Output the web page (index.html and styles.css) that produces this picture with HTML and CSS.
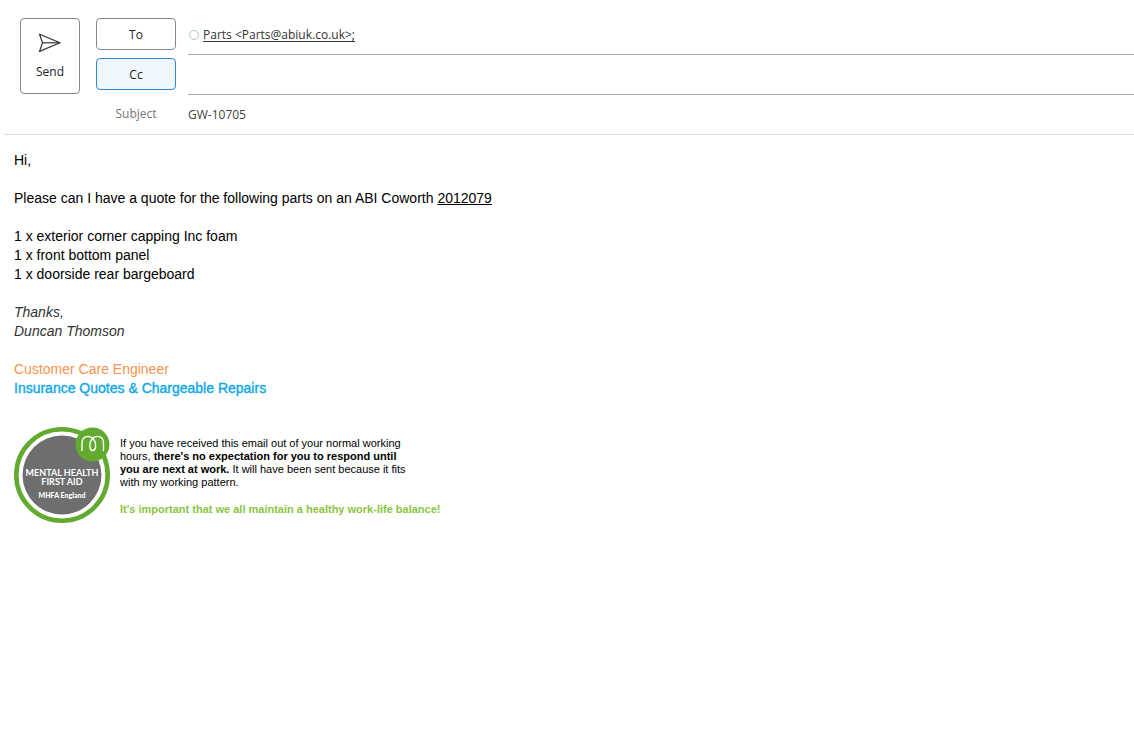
FILE: index.html
```
<!DOCTYPE html>
<html lang="en">
<head>
    <meta charset="UTF-8">
    <meta name="viewport" content="width=device-width, initial-scale=1.0">
    <title>GW-10705 - Message</title>
    <link rel="stylesheet" href="styles.css">
</head>
<body>
    <form class="header">
        <button type="button" class="btn send-btn">
            <svg class="send-icon" width="24" height="20" viewBox="0 0 24 20" fill="none" stroke="#333" stroke-width="1.2" stroke-linejoin="round">
                <path d="M1.5 1.2 L22 9.8 L1.5 18.4 L4.5 9.8 Z"/>
                <path d="M4.5 9.8 H22"/>
            </svg>
            <span>Send</span>
        </button>

        <div class="row">
            <button type="button" class="btn field-btn">To</button>
            <div class="field line">
                <span class="presence"></span>
                <a class="recipient" href="mailto:Parts@abiuk.co.uk">Parts &lt;Parts@abiuk.co.uk&gt;;</a>
            </div>
        </div>

        <div class="row">
            <button type="button" class="btn field-btn active">Cc</button>
            <input type="text" class="field line" id="cc" aria-label="Cc">
        </div>

        <div class="row">
            <label class="subject-label" for="subject">Subject</label>
            <input type="text" class="field" id="subject" value="GW-10705">
        </div>
    </form>

    <main class="message">
        <p>Hi,</p>
        <p>Please can I have a quote for the following parts on an ABI Coworth <u>2012079</u></p>
        <p>
            1 x exterior corner capping Inc foam<br>
            1 x front bottom panel<br>
            1 x doorside rear bargeboard
        </p>
        <p class="sign-off">Thanks,<br>Duncan Thomson</p>
        <p>
            <span class="job">Customer Care Engineer</span><br>
            <span class="team">Insurance Quotes &amp; Chargeable Repairs</span>
        </p>

        <div class="footer">
            <svg class="badge" width="96" height="96" viewBox="0 0 96 96" role="img" aria-label="Mental Health First Aid, MHFA England">
                <circle cx="48" cy="48" r="45.7" fill="#fff" stroke="#62ab30" stroke-width="4.6"/>
                <circle cx="48" cy="48" r="39.5" fill="#6e6e6e"/>
                <circle cx="78.5" cy="17.5" r="17" fill="#62ab30"/>
                <path d="M68 23.5 V16 C68 8.500 76.500 8 79.500 12 C83 16.500 82 23.500 78.700 23.500 C75.500 23.500 74.500 16.500 78 12 C81 8 89.500 8.500 89.500 16 V23.500" fill="none" stroke="#fff" stroke-width="1.4" stroke-linecap="round"/>
                <g class="badge-text" text-anchor="middle">
                    <text x="48" y="49" class="badge-title">MENTAL HEALTH</text>
                    <text x="48" y="58" class="badge-title">FIRST AID</text>
                    <text x="48" y="71" class="badge-name">MHFA England</text>
                </g>
            </svg>
            <div class="notice">
                <p>
                    If you have received this email out of your normal working<br>
                    hours, <b>there's no expectation for you to respond until</b><br>
                    <b>you are next at work.</b> It will have been sent because it fits<br>
                    with my working pattern.
                </p>
                <p class="balance">It's important that we all maintain a healthy work-life balance!</p>
            </div>
        </div>
    </main>
</body>
</html>
```
FILE: styles.css
```
* {
    box-sizing: border-box;
}

body {
    margin: 0;
    background-color: #fff;
    color: #000;
    font-family: "Liberation Sans", Arial, sans-serif;
    font-size: 14px;
    line-height: 19px;
}

.header {
    display: grid;
    grid-template-columns: 60px 1fr;
    grid-template-rows: 40px 40px 39px;
    column-gap: 16px;
    margin-left: 4px;
    padding: 15px 0 0 16px;
    border-bottom: 1px solid #dcdcdc;
    font-family: "Open Sans", "Segoe UI", sans-serif;
    font-size: 12px;
}

.btn {
    background-color: #fff;
    color: #222;
    border: 1px solid #8a8a8a;
    border-radius: 4px;
    padding: 0;
    font: inherit;
    cursor: pointer;
}

.send-btn {
    display: flex;
    flex-direction: column;
    align-items: center;
    justify-content: center;
    gap: 9px;
    grid-row: 1 / 3;
    height: 76px;
    margin-top: 3px;
    padding-top: 2px;
}

.row {
    grid-column: 2;
    display: grid;
    grid-template-columns: 80px 1fr;
    column-gap: 12px;
}

.field-btn {
    height: 32px;
    margin-top: 3px;
}

.field-btn.active {
    background-color: #eff6fc;
    border-color: #2b88d8;
}

.field {
    display: flex;
    align-items: center;
    gap: 4px;
    width: 100%;
    height: 40px;
    padding: 0;
    border: none;
    outline: none;
    background: none;
    color: #444;
    font: inherit;
}

.line {
    border-bottom: 1px solid #aaa;
}

.presence {
    width: 10px;
    height: 10px;
    margin-left: 1px;
    border: 1px solid #a9c4cc;
    border-radius: 50%;
}

.recipient {
    color: #333;
    text-underline-offset: 2px;
}

.subject-label {
    color: #777;
    text-align: center;
    line-height: 38px;
}

#subject {
    height: 38px;
}

.message {
    padding: 16px 14px;
}

p {
    margin: 0 0 19px;
}

.sign-off {
    color: #333;
    font-style: italic;
}

.job {
    color: #f79450;
}

.team {
    color: #12a9e6;
    -webkit-text-stroke: 0.4px;
}

.footer {
    display: flex;
    gap: 10px;
    margin-top: 29px;
}

.badge {
    flex: none;
}

.badge-text {
    fill: #fff;
    font-family: Lato, sans-serif;
    font-weight: bold;
}

.badge-title {
    font-size: 9px;
}

.badge-name {
    font-size: 7px;
    font-weight: 900;
}

.notice {
    padding-top: 10px;
    font-size: 11px;
    line-height: 13px;
}

.notice p {
    margin-bottom: 14px;
}

.notice .balance {
    color: #8bc53f;
    font-weight: bold;
}
```
